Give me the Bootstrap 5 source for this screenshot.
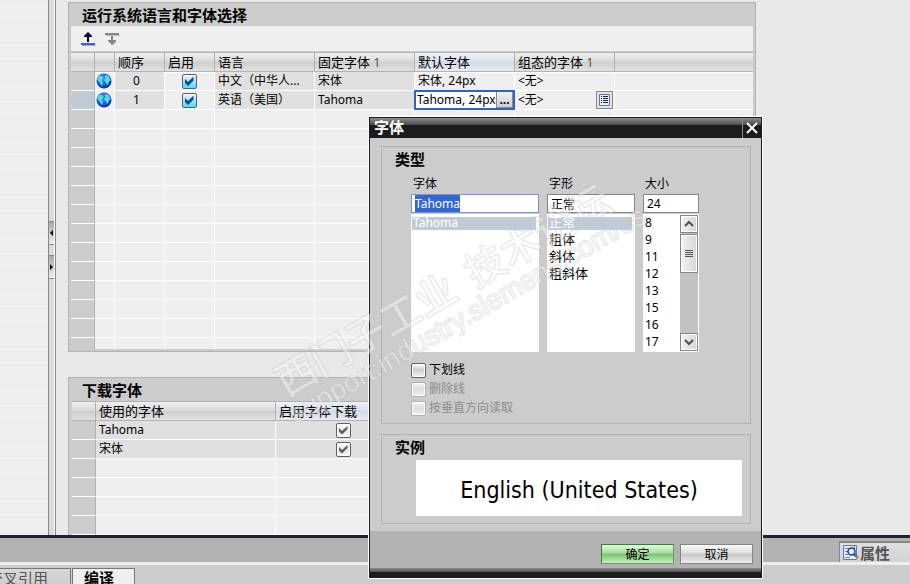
<!DOCTYPE html>
<html lang="zh-CN">
<head>
<meta charset="utf-8">
<meta name="viewport" content="width=device-width, initial-scale=1">
<title>运行系统语言和字体选择</title>
<link href="https://cdn.jsdelivr.net/npm/bootstrap@5.3.0/dist/css/bootstrap.min.css" rel="stylesheet">
<style>
  :root { --edge: #b2b2b2; --face: #cccccc; --pane: #efefef; }
  body { font: 12px/16px "Noto Sans", "Noto Sans CJK SC", sans-serif; color: #000; background: #e9e9e9; }
  .lat { font-size: 12px; }
  .heading { font-size: 15px; line-height: 20px; font-weight: 700; margin: 0; }

  .tree { width: 48px; background: repeating-linear-gradient(#efefef 0 18px, #e6e6e6 18px 19px) 0 5px; }
  .splitter { width: 8px; border: 1px solid #85898c; border-width: 0 1px; background: #dcdcdc; padding: 221px 0 0; box-shadow: inset -1px 0 #fff; gap: 10px; }
  .grip { width: 5px; height: 24px; padding: 0; border: 1px solid #85898c; border-width: 1px 0; background: linear-gradient(#a8a8a8, #efefef); }
  .grip svg { width: 4px; height: 6px; display: block; }

  .editor { padding: 2px 154px 0 12px; }
  .panel { background: var(--face); border: 1px solid var(--edge); padding: 0 2px 2px; }
  .panel .heading { padding: 2px 11px 1px; height: 23px; }
  .tools { background: var(--pane); height: 25px; padding: 5px 9px; margin-bottom: 1px; }
  .tools button, .cellbtn { border: 0; background: none; padding: 0; line-height: 0; }

  .sheet { table-layout: fixed; width: 100%; border-collapse: separate; border-spacing: 0; background: var(--pane); }
  .sheet th { height: 20px; padding: 0 3px; font-weight: 400; font-size: 13px; line-height: 17px; white-space: nowrap; overflow: hidden;
    border: solid var(--edge); border-width: 1px 1px 1px 0;
    background: linear-gradient(#f0f0f0, #d8d8d8 50%, #cdcdcd 51%, #e2e2e2); }
  .sheet th.active { background: linear-gradient(#eef2f8, #d9dfe8 50%, #d3dae4 51%, #e8ecf2); }
  .sheet th:last-child { border-right: 0; }
  .sheet thead { box-shadow: 0 1px #fff; }
  .sheet td { height: 19px; padding: 0 3px; line-height: 18px; border: solid #fff; border-width: 0 1px 1px 0; white-space: nowrap; overflow: hidden; }
  .sheet td:first-child { background: var(--face); border-right-color: var(--edge); }
  .sheet td.dim { background: #e0e0e0; }
  .sheet tr.current td:first-child { background: #c0cad5; }
  .sheet td:last-child { border-right: 0; }
  .sheet tr.cut td { height: 11px; border-bottom: 0; }
  .sheet sup { font-size: 12px; top: 0; color: #7a4a10; vertical-align: baseline; }
  .sheet td.order { padding-right: 9px; text-align: center; }
  .sheet td.listcell { padding-right: 1px; }
  .globe { width: 16px; height: 16px; display: block; }
  td.icon { padding: 0 1px !important; }

  .box { appearance: none; width: 15px; height: 15px; margin: 0; border: 1px solid #5c6166; border-radius: 2px; flex: none; display: inline-block; vertical-align: middle;
    background: center/13px 13px no-repeat, linear-gradient(#fff, #c9cccf 45%, #f4f4f4); box-shadow: inset 0 0 0 1px #fff; }
  .sheet .box { display: block; margin: 0 auto; }
  .box.on { background-image: url("data:image/svg+xml,%3Csvg xmlns='http://www.w3.org/2000/svg' viewBox='0 0 13 13'%3E%3Cpath d='M2 4L5 7L10.500 1.500V5.500L5 11L2 8Z' fill='%23084a94'/%3E%3C/svg%3E"), linear-gradient(#f4f8fd, #a4ddf2 55%, #3fe6ff); box-shadow: none; }
  .box.grey { background-image: url("data:image/svg+xml,%3Csvg xmlns='http://www.w3.org/2000/svg' viewBox='0 0 13 13'%3E%3Cpath d='M2 4L5 7L10.500 2V5L5 10.500L2 7.500Z' fill='%23606060'/%3E%3C/svg%3E"), linear-gradient(#fff, #e4e4e4 50%, #f8f8f8); }
  .box:disabled { border-color: #b0b0b0; background-image: linear-gradient(#f4f4f4, #dedede 50%, #f0f0f0); }

  .editcell { padding: 0 !important; overflow: visible !important; position: relative; }
  .editing { height: 20px; margin: -1px; border: 1px solid #2f62c8; outline: 1px solid #2f62c8; outline-offset: -2px; background: #fff; padding: 1px 1px 1px 2px; }
  .editing input { width: 100%; min-width: 0; border: 0; padding: 0; background: none; outline: 0; color: #000; font-size: 12px; line-height: 16px; }
  .editing button { width: 17px; border: 1px solid #8a8a8a; border-width: 0 1px 1px; padding: 0; background: linear-gradient(#f2f2f2, #cfcfcf); flex: none; line-height: 12px; font-weight: 700; }

  .fonts { margin-top: 25px; border-bottom: 0; padding: 0 2px 0 3px; }
  .fonts .heading { padding-left: 10px; }
  .rule { height: 3px; background: #1a2233; }
  .inspector { height: 27px; background: var(--edge); border-bottom: 3px solid #efefef; }
  .proptab { width: 71px; height: 21px; margin-top: 3px; border: 2px solid #85858a; border-width: 2px 0 0 1px; background: linear-gradient(#e0e0e0, #d2d2d2); color: #555; font-size: 15px; line-height: 16px; font-weight: 700; padding: 0 2px; }
  .tabs { height: 19px; background: var(--face); padding-top: 3px; gap: 1px; }
  .tabs button { height: 18px; border: 1px solid #777; border-bottom: 0; font-size: 15px; line-height: 18px; padding: 0 22px 0 11px; white-space: nowrap; overflow: hidden; background: linear-gradient(#d8d8d8, #ccc); color: #555; }
  .tabs button:first-child { width: 71px; border-left: 0; padding-left: 0; }
  .tabs button.open { width: 63px; padding-right: 0; background: var(--pane); color: #000; font-weight: 700; text-align: left; }

  .dialogbox { position: absolute; left: 368px; top: 116px; width: 395px; background: #1c1c1c; border: 1px solid #fff; padding: 1px; }
  .titlebar { height: 20px; background: linear-gradient(#8c8c8c, #4c4c4c 7px, #1c1c1c 7px); color: #fff; }
  .titlebar .heading { padding-left: 4px; line-height: 18px; }
  .titlebar button { width: 19px; border: 0; border-left: 1px solid #8c8c8c; background: none; padding: 0; line-height: 0; }
  .content { background: var(--face); padding: 8px 10px 8px 11px; }
  .group { border: 1px solid var(--edge); padding: 2px 8px 7px 29px; }
  .group > .heading { margin-left: -16px; }
  .fields { gap: 8px; margin-top: 6px; }
  .fields label { display: block; padding-left: 2px; line-height: 18px; margin-bottom: 2px; height: 17px; }
  .fields input { display: block; width: 100%; height: 19px; border: 1px solid #858585; padding: 0 3px; line-height: 16px; background: #fff; color: #000; font-size: 12px; outline: 0; }
  .fields .focused { border-color: #7f93c4; }
  .focused::selection { background: #3465d0; color: #fff; }
  .w-a { width: 128px; } .w-b { width: 88px; } .w-c { width: 56px; }
  .choices { height: 138px; margin-top: 1px; background: #fff; padding: 1px 1px 1px 0; }
  .choices .list-group-item { border: 0; border-radius: 0; margin: 0 2px 0 1px; padding: 0 1px 2px; height: 17px; line-height: 15px; background: none; color: #000; font-size: 13px; white-space: nowrap; width: auto; }
  .choices .list-group-item.lat { font-size: 12px; }
  .choices .list-group-item.active { background: linear-gradient(transparent 2px, #c1cbd6 2px 15px, transparent 15px); color: #fff; }
  .bar { width: 18px; background: #c2c2c2; flex: none; }
  .bar button { display: flex; align-items: center; justify-content: center; width: 18px; height: 18px; border: 1px solid #858585; background: linear-gradient(90deg, #f2f2f2, #d6d6d6); padding: 0; box-shadow: inset 0 0 0 1px #fff; }
  .bar .thumb { height: 39px; margin: 1px 0 auto; }
  .options { margin-top: 10px; gap: 3px; }
  .options label { display: flex; align-items: center; gap: 3px; height: 16px; }
  .options .off { color: #8c8c8c; }
  .sample { height: 56px; background: #fff; font: 23px/60px "DejaVu Sans Condensed", "Noto Sans", sans-serif; text-align: center; margin: 3px 0 0 5px; overflow: hidden; }
  .group.demo { margin-top: 10px; }
  .actions { height: 37px; background: var(--edge); padding: 13px 8px 0; gap: 6px; margin-top: -1px; position: relative; }
  .actions .btn { width: 73px; height: 20px; border: 1px solid #858585; border-radius: 0; padding: 0; font-size: 12px; line-height: 17px; color: #000; background: linear-gradient(#fafafa, #dedede 45%, #c8c8c8 50%, #ececec); }
  .actions .ok { border-color: #2f8430 #6a9a6a #858585 #2f8430; background: linear-gradient(#e6f8e0, #a6dd9c 45%, #76c46c 50%, #c8f0be); }
  .foot { height: 9px; background: linear-gradient(#8c8c8c, #505050 4px, #1c1c1c 4px); }

  .stamp { position: absolute; left: 257px; top: 151px; width: 420px; height: 290px; pointer-events: none; }
  .stamp text { fill: #fff; fill-opacity: .42; stroke: #b4b4b4; stroke-opacity: .28; stroke-width: 2; paint-order: stroke; stroke-linejoin: round; }
</style>
</head>
<body class="vh-100 overflow-hidden d-flex flex-column position-relative">
<svg width="0" height="0" class="position-absolute" aria-hidden="true">
  <defs>
    <radialGradient id="sea" cx=".4" cy=".35" r=".65"><stop offset="0" stop-color="#3aa0f4"/><stop offset=".6" stop-color="#1268d8"/><stop offset="1" stop-color="#0a2f9c"/></radialGradient>
    <symbol id="globe" viewBox="0 0 16 16">
      <circle cx="8" cy="8" r="7.500" fill="url(#sea)"/>
      <path d="M1.500 5L3.500 3L6 3L7.500 5L6.500 6.500L5.500 7.500L6.500 9L7 11L5.500 13L4.500 10.500L3 8.500L1.500 7Z M8.500 3.500L10 2L12.500 3L14 5.500L14.500 8L13 8L12.500 10.500L11 12L10 9.500L8.500 8L8.500 6L10 5Z" fill="#58d8e4"/>
    </symbol>
  </defs>
</svg>

<main class="d-flex flex-grow-1 overflow-hidden">
  <aside class="tree flex-shrink-0"></aside>
  <div class="splitter flex-shrink-0 d-flex flex-column">
    <button class="grip" aria-label="折叠"><svg viewBox="0 0 4 6"><path d="M4 0V6L1 3Z"/></svg></button>
    <button class="grip" aria-label="展开"><svg viewBox="0 0 4 6"><path d="M1 0V6L4 3Z"/></svg></button>
  </div>

  <div class="editor flex-grow-1 overflow-hidden">
    <section class="panel">
      <h2 class="heading">运行系统语言和字体选择</h2>
      <div class="tools d-flex">
        <button aria-label="上移"><svg width="16" height="16"><path d="M2 13H15.500V15H2Z" fill="#aaa"/><path d="M7 11V6H4V5L8 1L12 5V6H9V11Z" fill="#000040"/><path d="M1 12H15V14H1Z" fill="#3c5fe0"/></svg></button>
        <button aria-label="下移" class="ms-2"><svg width="16" height="16"><path d="M2 4H16V5H2Z M9 12L13 10L9 15Z" fill="#bbb"/><path d="M1 2H15V4H1Z M7 5H9V9H12V10L8 14L4 10V9H7Z" fill="#858585"/></svg></button>
      </div>
      <table class="sheet">
        <colgroup><col style="width:24px"><col style="width:20px"><col style="width:50px"><col style="width:50px"><col style="width:100px"><col style="width:100px"><col style="width:100px"><col style="width:100px"><col></colgroup>
        <thead><tr><th></th><th></th><th>顺序</th><th>启用</th><th>语言</th><th>固定字体 <sup>1</sup></th><th class="active">默认字体</th><th>组态的字体 <sup>1</sup></th><th></th></tr></thead>
        <tbody>
          <tr><td></td><td class="icon"><svg class="globe"><use href="#globe"/></svg></td><td class="dim order lat">0</td><td><input type="checkbox" class="box on" checked aria-label="启用中文"></td><td class="dim">中文（中华人...</td><td class="dim">宋体</td><td>宋体<span class="lat">, 24px</span></td><td>&lt;无&gt;</td><td></td></tr>
          <tr class="current"><td></td><td class="icon"><svg class="globe"><use href="#globe"/></svg></td><td class="dim order lat">1</td><td><input type="checkbox" class="box on" checked aria-label="启用英语"></td><td class="dim">英语（美国）</td><td class="dim lat">Tahoma</td>
            <td class="editcell"><div class="editing d-flex"><input value="Tahoma, 24px" aria-label="默认字体"><button aria-label="选择字体">...</button></div></td>
            <td class="listcell"><div class="d-flex justify-content-between align-items-center"><span>&lt;无&gt;</span><button class="cellbtn" aria-label="列表"><svg width="17" height="18"><path d="M.5.5H16.500V17.500H.5Z" fill="#e4e4e4" stroke="#858585"/><path d="M3.500 3.500H13.500V14.500H3.500Z" fill="#eef2ff" stroke="#5b70cc"/><path d="M5 5.500H6M7 5.500H12M5 7.500H6M7 7.500H12M5 9.500H6M7 9.500H12M5 11.500H6M7 11.500H12" stroke="#102050"/></svg></button></div></td><td></td></tr>
          <tr><td></td><td></td><td></td><td></td><td></td><td></td><td></td><td></td><td></td></tr>
          <tr><td></td><td></td><td></td><td></td><td></td><td></td><td></td><td></td><td></td></tr>
          <tr><td></td><td></td><td></td><td></td><td></td><td></td><td></td><td></td><td></td></tr>
          <tr><td></td><td></td><td></td><td></td><td></td><td></td><td></td><td></td><td></td></tr>
          <tr><td></td><td></td><td></td><td></td><td></td><td></td><td></td><td></td><td></td></tr>
          <tr><td></td><td></td><td></td><td></td><td></td><td></td><td></td><td></td><td></td></tr>
          <tr><td></td><td></td><td></td><td></td><td></td><td></td><td></td><td></td><td></td></tr>
          <tr><td></td><td></td><td></td><td></td><td></td><td></td><td></td><td></td><td></td></tr>
          <tr><td></td><td></td><td></td><td></td><td></td><td></td><td></td><td></td><td></td></tr>
          <tr><td></td><td></td><td></td><td></td><td></td><td></td><td></td><td></td><td></td></tr>
          <tr><td></td><td></td><td></td><td></td><td></td><td></td><td></td><td></td><td></td></tr>
          <tr><td></td><td></td><td></td><td></td><td></td><td></td><td></td><td></td><td></td></tr>
          <tr class="cut"><td></td><td></td><td></td><td></td><td></td><td></td><td></td><td></td><td></td></tr>
        </tbody>
      </table>
    </section>

    <section class="panel fonts">
      <h2 class="heading">下载字体</h2>
      <table class="sheet">
        <colgroup><col style="width:24px"><col style="width:180px"><col style="width:136px"><col></colgroup>
        <thead><tr><th></th><th>使用的字体</th><th class="active">启用字体下载</th><th></th></tr></thead>
        <tbody>
          <tr><td></td><td class="dim lat">Tahoma</td><td class="dim"><input type="checkbox" class="box grey" checked aria-label="下载 Tahoma"></td><td></td></tr>
          <tr><td></td><td class="dim">宋体</td><td class="dim"><input type="checkbox" class="box grey" checked aria-label="下载宋体"></td><td></td></tr>
          <tr><td></td><td></td><td></td><td></td></tr>
          <tr><td></td><td></td><td></td><td></td></tr>
          <tr><td></td><td></td><td></td><td></td></tr>
          <tr><td></td><td></td><td></td><td></td></tr>
        </tbody>
      </table>
    </section>
  </div>
</main>

<div class="rule flex-shrink-0"></div>
<div class="inspector flex-shrink-0 d-flex justify-content-end">
  <button class="proptab d-flex align-items-center"><svg width="18" height="18" class="flex-shrink-0"><path d="M1.500 1.500H14.500V15.500H1.500Z" fill="#e8eeff" stroke="#5b70e0"/><path d="M3 4.500H7M3 7.500H6M3 10.500H6M3 13.500H8M12.500 2V5" stroke="#7080b0"/><circle cx="9.500" cy="7.500" r="3.500" fill="#d8ecfa" stroke="#30405c" stroke-width="1.500"/><path d="M12 10L14 12" stroke="#2c62c8" stroke-width="3"/><path d="M14 12L16 14" stroke="#c08020" stroke-width="3"/></svg><span>属性</span></button>
</div>
<nav class="tabs flex-shrink-0 d-flex align-items-start">
  <button class="d-flex justify-content-end">交叉引用</button><button class="open">编译</button>
</nav>

<div class="dialogbox" role="dialog" aria-labelledby="dlg">
  <div class="titlebar d-flex justify-content-between"><h1 class="heading" id="dlg">字体</h1><button aria-label="关闭"><svg width="12" height="12"><path d="M1 1L11 11M11 1L1 11" stroke="#fff" stroke-width="2"/></svg></button></div>
  <div class="content">
    <section class="group">
      <h2 class="heading">类型</h2>
      <div class="fields d-flex">
        <div class="w-a"><label for="face">字体</label><input id="face" class="focused lat" value="Tahoma">
          <div class="choices list-group rounded-0"><button class="list-group-item text-start active lat">Tahoma</button></div></div>
        <div class="w-b"><label for="style">字形</label><input id="style" value="正常">
          <div class="choices list-group rounded-0"><button class="list-group-item text-start active">正常</button><button class="list-group-item text-start">粗体</button><button class="list-group-item text-start">斜体</button><button class="list-group-item text-start">粗斜体</button></div></div>
        <div class="w-c"><label for="size">大小</label><input id="size" class="lat" value="24">
          <div class="choices d-flex justify-content-between">
            <div class="list-group rounded-0"><button class="list-group-item text-start lat">8</button><button class="list-group-item text-start lat">9</button><button class="list-group-item text-start lat">11</button><button class="list-group-item text-start lat">12</button><button class="list-group-item text-start lat">13</button><button class="list-group-item text-start lat">15</button><button class="list-group-item text-start lat">16</button><button class="list-group-item text-start lat">17</button></div>
            <div class="bar d-flex flex-column"><button aria-label="向上"><svg width="12" height="8"><path d="M2 6L6 2L10 6" fill="none" stroke="#505050" stroke-width="2"/></svg></button><button class="thumb" aria-label="滚动"><svg width="8" height="8"><path d="M0 .5H8M0 2.500H8M0 4.500H8M0 6.500H8" stroke="#505050"/></svg></button><button aria-label="向下"><svg width="12" height="8"><path d="M2 2L6 6L10 2" fill="none" stroke="#505050" stroke-width="2"/></svg></button></div>
          </div></div>
      </div>
      <div class="options d-flex flex-column">
        <label><input type="checkbox" class="box">下划线</label>
        <label class="off"><input type="checkbox" class="box" disabled>删除线</label>
        <label class="off"><input type="checkbox" class="box" disabled>按垂直方向读取</label>
      </div>
    </section>
    <section class="group demo">
      <h2 class="heading">实例</h2>
      <div class="sample">English (United States)</div>
    </section>
  </div>
  <div class="actions d-flex justify-content-end"><button class="btn ok">确定</button><button class="btn">取消</button></div>
  <div class="foot"></div>
</div>

<svg class="stamp" viewBox="0 0 420 290" aria-hidden="true">
  <g transform="rotate(-30 35 240)">
    <text x="27" y="243" font-size="40" font-weight="500" font-family="Noto Sans CJK SC" xml:space="preserve">西门子工业  技术论坛</text>
    <text x="22" y="271" font-size="28" font-family="Liberation Sans">support.industry.siemens.com/cs</text>
  </g>
</svg>

<script src="https://cdn.jsdelivr.net/npm/bootstrap@5.3.0/dist/js/bootstrap.bundle.min.js"></script>
<script>
  const face = document.getElementById('face');
  face.focus();
  face.select();
</script>
</body>
</html>
